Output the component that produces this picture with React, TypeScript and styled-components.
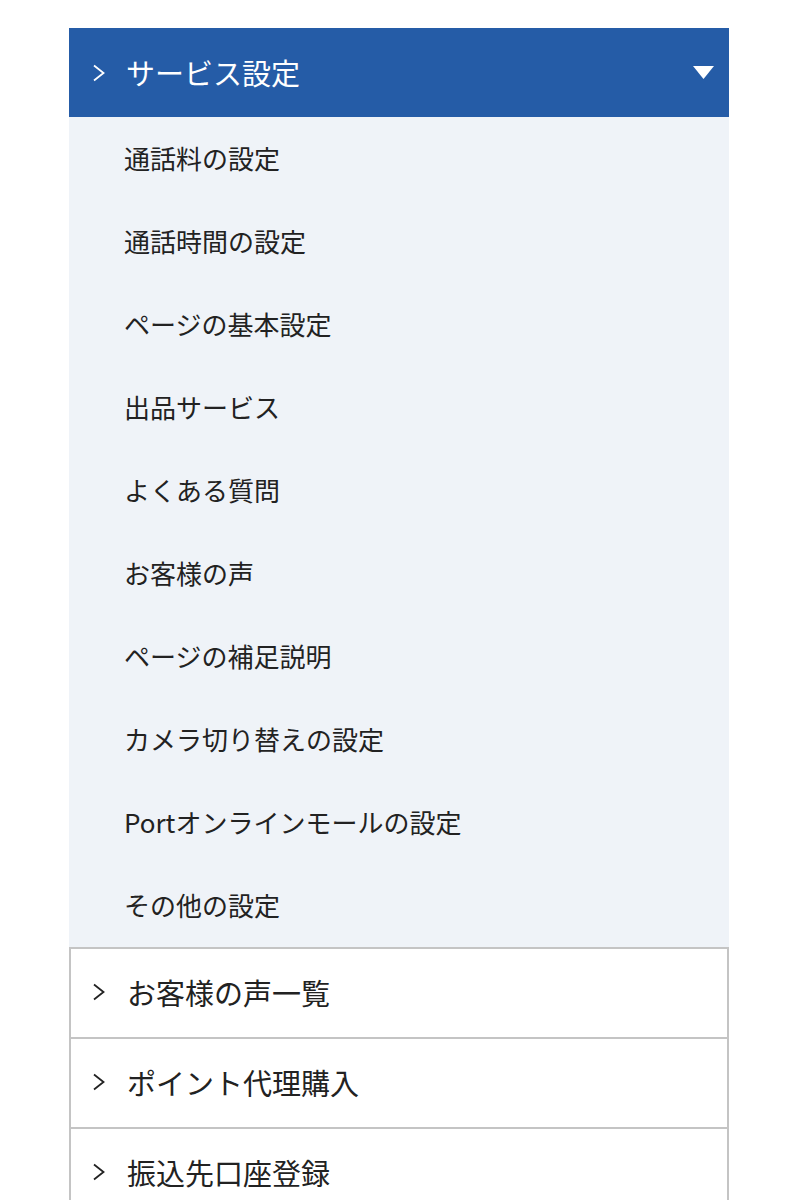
import React from "react";
import styled, { createGlobalStyle } from "styled-components";

const GlobalStyle = createGlobalStyle`
  html, body { margin: 0; padding: 0; background: #ffffff; }
  body { font-family: "Noto Sans CJK JP", "Noto Sans", sans-serif; color: #222; }
`;

const Menu = styled.nav`
  width: 660px;
  margin: 28px 0 0 69px;
  display: flex;
  flex-direction: column;
`;

const Header = styled.div`
  height: 89px;
  background: #255ca7;
  color: #ffffff;
  display: flex;
  align-items: center;
  padding: 0 15px 0 23px;
  box-sizing: border-box;
`;

const HeaderTitle = styled.span`
  flex: 1;
  font-size: 29px;
  line-height: 1;
  margin-left: 21px;
`;

const SubList = styled.ul`
  list-style: none;
  margin: 0;
  padding: 0;
  background: #eff3f8;
`;

const SubItem = styled.li`
  height: 83px;
  box-sizing: border-box;
  display: flex;
  align-items: center;
  padding: 0 0 3px 55px;
  font-size: 26px;
  color: #222;
`;

const Row = styled.div`
  height: 90px;
  box-sizing: border-box;
  border: 2px solid #c4c4c4;
  border-bottom: none;
  display: flex;
  align-items: center;
  padding: 0 0 2px 21px;
`;

const RowTitle = styled.span`
  font-size: 29px;
  color: #222;
  margin-left: 22px;
`;

const Chevron = ({ color }: { color: string }) => (
  <svg width="13" height="18" viewBox="0 0 13 18" style={{ flexShrink: 0 }}>
    <polyline points="2,1.5 11.5,9 2,16.5" fill="none" stroke={color} strokeWidth="1.8" />
  </svg>
);

const Triangle = () => (
  <svg width="21" height="13" viewBox="0 0 21 13">
    <polygon points="0,0 21,0 10.5,13" fill="#ffffff" />
  </svg>
);

const subItems = [
  "通話料の設定",
  "通話時間の設定",
  "ページの基本設定",
  "出品サービス",
  "よくある質問",
  "お客様の声",
  "ページの補足説明",
  "カメラ切り替えの設定",
  "Portオンラインモールの設定",
  "その他の設定",
];

const rows = ["お客様の声一覧", "ポイント代理購入", "振込先口座登録"];

export default function App() {
  return (
    <>
      <GlobalStyle />
      <Menu>
        <Header>
          <Chevron color="#ffffff" />
          <HeaderTitle>サービス設定</HeaderTitle>
          <Triangle />
        </Header>
        <SubList>
          {subItems.map((s) => (
            <SubItem key={s}>{s}</SubItem>
          ))}
        </SubList>
        {rows.map((r) => (
          <Row key={r}>
            <Chevron color="#222222" />
            <RowTitle>{r}</RowTitle>
          </Row>
        ))}
      </Menu>
    </>
  );
}
